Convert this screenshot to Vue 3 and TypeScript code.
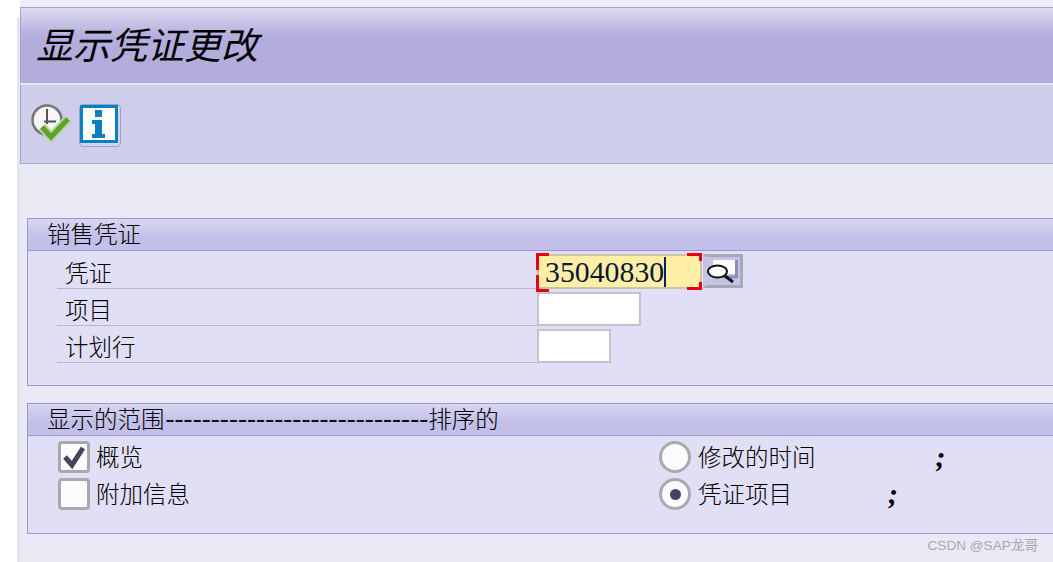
<template>
  <div class="page">
    <div class="side"></div>
    <div class="screen">
      <div class="top-strip"></div>
      <h1 class="title">显示凭证更改</h1>
      <div class="toolbar">
        <svg class="clock" width="42" height="42" viewBox="0 0 42 42">
          <circle cx="16" cy="17" r="14.500" fill="#f6f6f8" stroke="#777" stroke-width="2.500" />
          <path d="M16 6v15M13 18.500h12" stroke="#555" stroke-width="2" fill="none" />
          <path d="M11 24l9 10 17-18" stroke="#bcd4ae" stroke-width="9" fill="none" />
          <path d="M11 24l9 10 17-18" stroke="#5da523" stroke-width="5" fill="none" />
        </svg>
        <button class="info-btn" type="button">
          <svg width="38" height="38" viewBox="0 0 38 38">
            <rect x="1.500" y="1.500" width="35" height="35" fill="#fff" stroke="#0a80c4" stroke-width="3" />
            <path d="M15 5h7v7h-7zM12 15h10v14h3v4H12v-4h3V19h-3z" fill="#0a80c4" />
          </svg>
        </button>
      </div>

      <section class="group first">
        <h2 class="group-head">销售凭证</h2>
        <div class="form">
          <div v-for="row in docRows" :key="row.label" class="form-row">
            <span class="label">{{ row.label }}</span>
            <div v-if="row.active" class="field-wrap">
              <div class="field active">35040830<i class="caret"></i></div>
              <i class="mark tl"></i><i class="mark tr"></i><i class="mark bl"></i><i class="mark br"></i>
              <button class="search" type="button">
                <svg width="32" height="26" viewBox="0 0 32 26">
                  <path d="M6 2h23v14H6z" fill="#fff" />
                  <path d="M29.500 2v17H16" stroke="#8f8cc0" stroke-width="3" fill="none" />
                  <ellipse cx="10.500" cy="13.500" rx="9.500" ry="6" fill="#fff" stroke="#111" stroke-width="2" />
                  <path d="M18 18l8 6" stroke="#111" stroke-width="3" />
                </svg>
              </button>
            </div>
            <div v-else class="field" :style="{ width: row.width + 'px' }"></div>
          </div>
        </div>
      </section>

      <section class="group second">
        <h2 class="group-head">显示的范围<span class="dashes">-----------------------------</span>排序的</h2>
        <div class="options">
          <div class="option-col left">
            <label class="option">
              <span class="check">
                <svg width="26" height="26" viewBox="0 0 26 26">
                  <path d="M4 13l7 8 11-17" stroke="#4a4060" stroke-width="5" fill="none" />
                </svg>
              </span>
              <span class="option-text">概览</span>
            </label>
            <label class="option">
              <span class="check"></span>
              <span class="option-text">附加信息</span>
            </label>
          </div>
          <div class="option-col">
            <label class="option">
              <span class="radio"></span>
              <span class="option-text radio-text">修改的时间</span>
              <span class="semi wide">;</span>
            </label>
            <label class="option">
              <span class="radio on"></span>
              <span class="option-text radio-text">凭证项目</span>
              <span class="semi">;</span>
            </label>
          </div>
        </div>
      </section>

      <div class="watermark">CSDN @SAP龙哥</div>
    </div>
  </div>
</template>

<script setup lang="ts">
interface DocRow {
  label: string;
  width: number;
  active?: boolean;
}

const docRows: DocRow[] = [
  { label: "凭证", width: 165, active: true },
  { label: "项目", width: 104 },
  { label: "计划行", width: 74 },
];
</script>

<style>
html,
body {
  margin: 0;
  overflow: hidden;
  background: #fff;
}
</style>

<style scoped>
.page {
  display: flex;
  width: 1053px;
  height: 562px;
  overflow: hidden;
  font-family: "Noto Sans CJK SC", "Liberation Serif", serif;
  font-weight: 300;
  color: #000;
  background: #fff;
}

.side {
  flex: 0 0 3px;
  margin-left: 17px;
  margin-top: 18px;
  background: #e4e4f3;
}

.screen {
  position: relative;
  flex: 1;
  min-width: 0;
  background: #eaeaf6;
}

.top-strip {
  height: 7px;
  background: #efeef8;
  border-bottom: 1px solid #a8a4c8;
}

.title {
  height: 75px;
  margin: 0;
  padding-left: 15px;
  box-sizing: border-box;
  border-left: 1px solid #a8a4c8;
  background: linear-gradient(#dcd9f1, #b3aedc 38%, #b1acdb);
  font-size: 37px;
  line-height: 70px;
  font-weight: 400;
  font-style: italic;
  color: #000;
}

.toolbar {
  display: flex;
  align-items: center;
  gap: 6px;
  height: 80px;
  box-sizing: border-box;
  padding: 3px 0 0 10px;
  margin-top: 1px;
  border-top: 1px solid #e4e3f5;
  border-left: 1px solid #a8a4c8;
  border-bottom: 1px solid #a8a4c8;
  background: #cecdea;
}

.clock {
  flex: none;
  margin-top: -3px;
}

.info-btn {
  display: flex;
  align-items: flex-start;
  justify-content: center;
  width: 42px;
  height: 43px;
  padding: 0 2px 0 0;
  box-sizing: border-box;
  border: 1px solid #a39cc8;
  border-radius: 4px;
  background: #d6d5ef;
}

.group {
  margin: 0 -4px 0 7px;
  border: 1px solid #9c96d3;
  background: #e0dff5;
}

.group.first {
  height: 168px;
  box-sizing: border-box;
  margin-top: 54px;
}

.group.second {
  height: 131px;
  box-sizing: border-box;
  margin-top: 17px;
}

.group-head {
  display: flex;
  align-items: center;
  height: 32px;
  box-sizing: border-box;
  margin: 0;
  padding: 0 0 3px 19px;
  border-bottom: 1px solid #9c96d3;
  background: linear-gradient(#d8d6f0, #c2bfe8 60%);
  font-size: 23.500px;
  font-weight: 300;
  color: #000;
  white-space: nowrap;
}

.dashes {
  margin-left: 1px;
  font-family: "Liberation Serif", serif;
  font-size: 27px;
  font-weight: 400;
  letter-spacing: 0.07px;
  color: #111;
}

.form {
  display: flex;
  flex-direction: column;
  padding: 1px 0 0 29px;
}

.form-row {
  display: flex;
  align-items: flex-end;
  height: 37px;
}

.label {
  flex: 0 0 480px;
  height: 34px;
  box-sizing: border-box;
  padding-left: 8px;
  border-bottom: 1px solid #b8b8c0;
  font-size: 23.500px;
  line-height: 34px;
}

.field-wrap {
  position: relative;
  display: flex;
  align-items: flex-start;
  gap: 1px;
}

.field {
  height: 34px;
  box-sizing: border-box;
  border: 2px solid #c2c2ca;
  background: #fff;
}

.field.active {
  display: flex;
  align-items: center;
  width: 165px;
  height: 35px;
  padding-left: 6px;
  border-color: #c9c5a8;
  background: #ffeea6;
  font-family: "Liberation Serif", serif;
  font-size: 29.800px;
  font-weight: 400;
  color: #0b1a33;
}

.caret {
  width: 2px;
  height: 30px;
  background: #10205e;
}

.mark {
  position: absolute;
  width: 10px;
  height: 14px;
  border: 0 solid #e60012;
}

.mark.tl {
  left: -1px;
  top: -1px;
  border-width: 3px 0 0 3px;
}

.mark.bl {
  left: -1px;
  top: 21px;
  border-width: 0 0 3px 3px;
}

.mark.tr {
  left: 150px;
  top: -1px;
  width: 12px;
  height: 5px;
  border-width: 3px 3px 0 0;
}

.mark.br {
  left: 150px;
  top: 28px;
  width: 12px;
  height: 5px;
  border-width: 0 3px 3px 0;
}

.search {
  display: flex;
  align-items: center;
  justify-content: center;
  width: 40px;
  height: 34px;
  padding: 0;
  box-sizing: border-box;
  border: 3px solid #a9a9b6;
  border-left-color: #c6c4e6;
  background: #c6c4e6;
}

.options {
  display: flex;
  padding: 5px 0 0 30px;
}

.option-col {
  display: flex;
  flex-direction: column;
  gap: 5px;
}

.option-col.left {
  flex: 0 0 601px;
}

.option {
  display: flex;
  align-items: center;
  gap: 6px;
  height: 32px;
  font-size: 23.500px;
  white-space: nowrap;
}

.option-text {
  margin-top: -2px;
}

.check {
  display: flex;
  align-items: center;
  justify-content: center;
  width: 32px;
  height: 32px;
  box-sizing: border-box;
  border: 3px solid #a8a8ae;
  border-radius: 4px;
  background: #fbfbfd;
}

.radio {
  display: flex;
  align-items: center;
  justify-content: center;
  width: 32px;
  height: 32px;
  box-sizing: border-box;
  border: 3px solid #a8a8ae;
  border-radius: 50%;
  background: #fbfbfd;
}

.radio.on::after {
  content: "";
  width: 11px;
  height: 11px;
  border-radius: 50%;
  background: #4a4060;
}

.radio-text {
  margin-left: 1px;
}

.semi {
  margin-left: 90px;
  font-family: "Liberation Serif", serif;
  font-size: 30px;
  font-style: italic;
  font-weight: 700;
  color: #000;
}

.semi.wide {
  margin-left: 114px;
}

.watermark {
  position: absolute;
  right: 15px;
  bottom: 8px;
  font-family: "Liberation Sans", "Noto Sans CJK SC", sans-serif;
  font-size: 13.600px;
  font-weight: 400;
  color: #a8a8ae;
}
</style>
